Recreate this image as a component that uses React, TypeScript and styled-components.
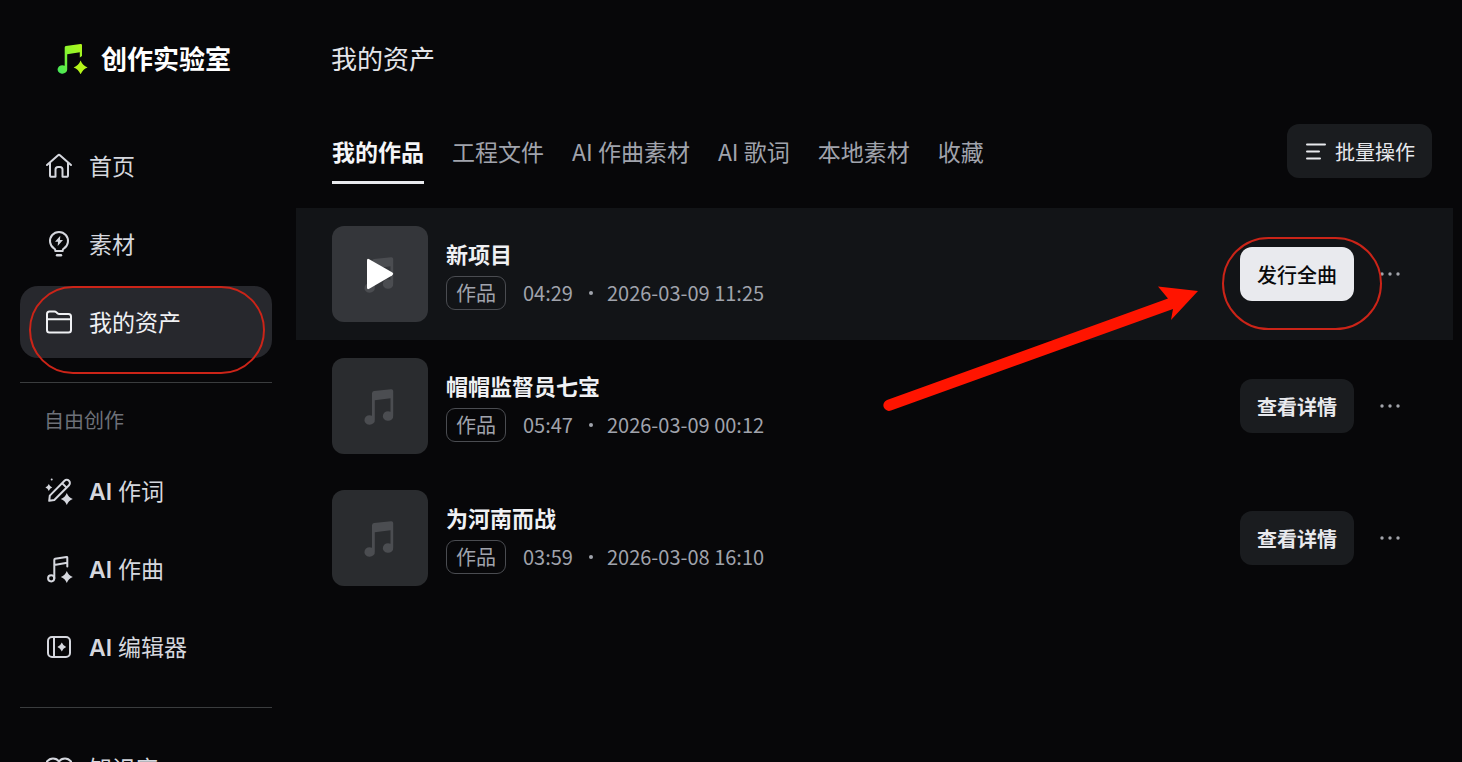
import React from "react";
import styled, { createGlobalStyle } from "styled-components";

const GlobalStyle = createGlobalStyle`
  *, *::before, *::after { box-sizing: border-box; }
  body {
    margin: 0;
    background: #070709;
    color: #e8e9ed;
    font-family: "Noto Sans CJK SC", sans-serif;
    overflow: hidden;
  }
  button { font: inherit; border: 0; cursor: pointer; }
  svg { display: block; }
`;

const Shell = styled.div`
  display: flex;
  height: 100vh;
  overflow: hidden;
`;

const Sidebar = styled.aside`
  flex: 0 0 296px;
  padding: 34px 24px 0 20px;
  overflow: hidden;
`;

const Brand = styled.a`
  display: flex;
  align-items: center;
  gap: 13px;
  height: 48px;
  padding-left: 36px;
  margin-bottom: 48px;
  color: #ffffff;
  font-size: 26px;
  font-weight: 700;
  line-height: 48px;
  text-decoration: none;
`;

const NavList = styled.ul`
  display: flex;
  flex-direction: column;
  gap: 6px;
  margin: 0;
  padding: 0;
  list-style: none;
`;

const NavItem = styled.li`
  position: relative;
`;

const NavLink = styled.a<{ $active?: boolean }>`
  display: flex;
  align-items: center;
  gap: 16px;
  height: 72px;
  padding-left: 25px;
  border-radius: 18px;
  background: ${(p) => (p.$active ? "#27282d" : "transparent")};
  color: ${(p) => (p.$active ? "#f0f1f4" : "#d5d7de")};
  font-family: Inter, "Noto Sans CJK SC", sans-serif;
  font-size: 23px;
  line-height: 36px;
  text-decoration: none;
`;

const NavText = styled.span`
  padding-top: 1px;
`;

const Latin = styled.span`
  font-weight: 600;
`;

const Divider = styled.hr`
  height: 1px;
  margin: 24px 0;
  border: 0;
  background: #3a3c3e;
`;

const SectionLabel = styled.h2`
  margin: -2px 0 20px;
  padding-left: 24px;
  color: #6d7078;
  font-size: 20px;
  font-weight: 400;
  line-height: 30px;
`;

const Main = styled.main`
  flex: 1;
  min-width: 0;
  padding: 34px 9px 0 0;
`;

const PageTitle = styled.h1`
  margin: 0 0 42px;
  padding-left: 35px;
  color: #e4e5e9;
  font-size: 26px;
  font-weight: 400;
  line-height: 48px;
`;

const Toolbar = styled.div`
  display: flex;
  align-items: flex-start;
  justify-content: space-between;
  padding: 0 21px 0 36px;
  margin-bottom: 24px;
`;

const Tabs = styled.div`
  display: flex;
  gap: 28px;
`;

const Tab = styled.button<{ $active?: boolean }>`
  height: 60px;
  padding: 0 0 4px;
  border-bottom: 3px solid ${(p) => (p.$active ? "#e8e9ed" : "transparent")};
  background: none;
  color: ${(p) => (p.$active ? "#f4f5f7" : "#a0a3ac")};
  font-size: 23px;
  font-weight: ${(p) => (p.$active ? 700 : 400)};
  line-height: 52px;
  white-space: nowrap;
`;

const BulkButton = styled.button`
  display: flex;
  align-items: center;
  gap: 8px;
  height: 54px;
  padding: 2px 17px 0 18px;
  border-radius: 12px;
  background: #1a1c1f;
  color: #e8e9ed;
  font-size: 20px;
  line-height: 30px;
`;

const Works = styled.ul`
  margin: 0;
  padding: 0;
  list-style: none;
`;

const Row = styled.li<{ $hover?: boolean }>`
  display: flex;
  align-items: center;
  gap: 18px;
  height: 132px;
  padding: 0 45px 0 36px;
  background: ${(p) => (p.$hover ? "#121417" : "transparent")};
`;

const Cover = styled.div<{ $hover?: boolean }>`
  position: relative;
  display: grid;
  place-items: center;
  flex: none;
  width: 96px;
  height: 96px;
  border-radius: 12px;
  background: ${(p) => (p.$hover ? "#34363a" : "#2a2c2f")};
`;

const PlayButton = styled.button`
  position: absolute;
  inset: 0;
  display: grid;
  place-items: center;
  padding: 0;
  background: none;
`;

const Info = styled.div`
  flex: 1;
  min-width: 0;
`;

const Title = styled.h3`
  margin: 0 0 8px;
  color: #f0f1f4;
  font-size: 22px;
  font-weight: 700;
  line-height: 30px;
`;

const Meta = styled.div`
  display: flex;
  align-items: center;
  color: #a0a3ac;
  font-size: 20px;
  line-height: 32px;
`;

const Tag = styled.span`
  padding: 0 9px;
  margin-right: 17px;
  border: 1px solid #4a4c51;
  border-radius: 9px;
`;

const Dot = styled.i`
  width: 4px;
  height: 4px;
  margin: 0 14px 0 16px;
  border-radius: 50%;
  background: #a0a3ac;
`;

const ActionSlot = styled.div`
  position: relative;
`;

const ActionButton = styled.button<{ $primary?: boolean }>`
  width: 114px;
  height: 54px;
  padding: 2px 0 0;
  border-radius: 12px;
  background: ${(p) => (p.$primary ? "#e9eaee" : "#1a1c1f")};
  color: ${(p) => (p.$primary ? "#08090b" : "#e8e9ed")};
  font-size: 20px;
  font-weight: ${(p) => (p.$primary ? 500 : 700)};
  line-height: 30px;
`;

const MoreButton = styled.button`
  display: grid;
  place-items: center;
  width: 36px;
  height: 36px;
  padding: 0;
  background: none;
  color: #a2a4ab;
`;

const Ring = styled.span<{ $left: number; $top: number; $width: number; $height: number }>`
  position: absolute;
  z-index: 2;
  left: ${(p) => p.$left}px;
  top: ${(p) => p.$top}px;
  width: ${(p) => p.$width}px;
  height: ${(p) => p.$height}px;
  border: 2px solid #cb2418;
  border-radius: 47px;
  pointer-events: none;
`;

const Arrow = styled.svg`
  position: absolute;
  z-index: 2;
  right: 154px;
  top: 36px;
  pointer-events: none;
`;

const Icon = ({ children }: { children: React.ReactNode }) => (
  <svg width="28" height="28" viewBox="0 0 28 28" fill="none" stroke="currentColor" strokeWidth="2" strokeLinecap="round" strokeLinejoin="round" aria-hidden="true">
    {children}
  </svg>
);

const spark = (x: number, y: number, r: number) => {
  const k = r * 0.28;
  return `M${x} ${y - r}Q${x + k} ${y - k} ${x + r} ${y}Q${x + k} ${y + k} ${x} ${y + r}Q${x - k} ${y + k} ${x - r} ${y}Q${x - k} ${y - k} ${x} ${y - r}Z`;
};

const HomeIcon = () => (
  <Icon>
    <path d="M2 13 12.8 3.4Q14 2.4 15.2 3.4L26 13" />
    <path d="M5 11V23.2Q5 24.8 6.6 24.8H10.5V17.5Q10.5 15 13 15H15Q17.5 15 17.5 17.5V24.8H21.4Q23 24.8 23 23.2V11" />
  </Icon>
);

const BulbIcon = () => (
  <Icon>
    <path d="M10.3 21V20.2Q10.3 19.2 9 18.4A9 9 0 1 1 19 18.4Q17.7 19.2 17.7 20.2V21Z" />
    <path d="M12 25.3H16" strokeWidth="2.4" />
    <path d="M15.3 5.8 10 11.8H13L12.7 16 18 10H15Z" fill="currentColor" stroke="none" />
  </Icon>
);

const FolderIcon = () => (
  <Icon>
    <path d="M2 6Q2 3.5 4.5 3.5H9.5Q10.6 3.5 11.5 4.4L12.4 5.3Q13.2 6 14.4 6H23.5Q26 6 26 8.5V22Q26 24.5 23.5 24.5H4.5Q2 24.5 2 22ZM2 11.2H26" />
  </Icon>
);

const PenIcon = () => (
  <Icon>
    <path d="M4.2 23.8 4.8 18.6 19.5 3.8A3 3 0 0 1 24 8.2L9.3 23ZM17.2 6.3 21.6 10.6" />
    <path d={spark(21.8, 22, 6)} fill="currentColor" stroke="none" />
    <path d={spark(3.8, 10.5, 3.4)} fill="currentColor" stroke="none" />
    <circle cx="6.7" cy="2.4" r="1" fill="currentColor" stroke="none" />
  </Icon>
);

const ComposeIcon = () => (
  <Icon>
    <circle cx="6.2" cy="23.3" r="3.1" />
    <path d="M9.3 23.3V4.8Q9.3 4 10.1 3.8L21.5 2Q22.3 1.9 22.3 2.7V11.6M9.3 10 22.3 7.8" />
    <path d={spark(21.8, 22, 6)} fill="currentColor" stroke="none" />
  </Icon>
);

const EditorIcon = () => (
  <Icon>
    <rect x="3" y="4" width="22" height="20" rx="4" />
    <path d="M9 4V24" />
    <path d={spark(16.8, 14, 4.4)} fill="currentColor" stroke="none" />
  </Icon>
);

const BookIcon = () => (
  <Icon>
    <path d="M14 7.5Q12 4.5 8 4.5Q4.5 4.5 2 7.5V23Q8 20 14 23Q20 20 26 23V7.5Q23.5 4.5 20 4.5Q16 4.5 14 7.5ZM14 7.5V23" />
  </Icon>
);

const Logo = () => (
  <svg width="32" height="32" viewBox="0 0 32 32" aria-hidden="true">
    <defs>
      <linearGradient id="brand" x1="0" y1="1" x2="1" y2="0">
        <stop offset="0" stopColor="#3fe65c" />
        <stop offset="0.6" stopColor="#8df52c" />
        <stop offset="1" stopColor="#b4f51a" />
      </linearGradient>
    </defs>
    <path
      fill="url(#brand)"
      d="M8.7 5.4Q8.7 4.2 9.9 4L24.5 2Q26 1.8 26 3.2V14L23.8 15.6V10.2L11.2 12.2V27.3A4.8 4.2 0 1 1 8.7 23.8Z"
    />
    <path d={spark(24.6, 25.4, 7)} fill="#b4f51a" />
  </svg>
);

const CoverNote = () => (
  <svg width="30" height="36" viewBox="1 -1 30 36" fill="#4b4d51" overflow="visible" aria-hidden="true">
    <path d="M8 4.4Q8 2.4 10 2.1L27 .2Q29.2 0 29.2 2V26.5A5.2 4.8 0 1 1 26.5 22.8V9.2L10.8 11.2V30.4A5.2 4.8 0 1 1 8 26.7Z" />
  </svg>
);

const PlayGlyph = () => (
  <svg width="28" height="32" viewBox="0 0 28 32" fill="#fff" aria-hidden="true">
    <path d="M1 2.5Q1 0 3.2 1.2L26 14.2Q28.4 15.8 26 17.4L3.2 30.8Q1 32 1 29.5Z" />
  </svg>
);

const BulkGlyph = () => (
  <svg width="22" height="20" viewBox="0 0 22 20" stroke="currentColor" strokeWidth="2" strokeLinecap="round" aria-hidden="true">
    <path d="M2 2.5H20M2 9.5H14M2 16.5H15" />
  </svg>
);

const MoreGlyph = () => (
  <svg width="22" height="4" viewBox="0 0 22 4" fill="currentColor" aria-hidden="true">
    <circle cx="3" cy="2" r="1.7" />
    <circle cx="11" cy="2" r="1.7" />
    <circle cx="19" cy="2" r="1.7" />
  </svg>
);

type Entry = { label: string; latin?: string; icon: React.ReactNode; active?: boolean };

const mainNav: Entry[] = [
  { label: "首页", icon: <HomeIcon /> },
  { label: "素材", icon: <BulbIcon /> },
  { label: "我的资产", icon: <FolderIcon />, active: true },
];

const createNav: Entry[] = [
  { latin: "AI", label: "作词", icon: <PenIcon /> },
  { latin: "AI", label: "作曲", icon: <ComposeIcon /> },
  { latin: "AI", label: "编辑器", icon: <EditorIcon /> },
];

const moreNav: Entry[] = [{ label: "知识库", icon: <BookIcon /> }];

const tabs = ["我的作品", "工程文件", "AI 作曲素材", "AI 歌词", "本地素材", "收藏"];

const works = [
  { title: "新项目", length: "04:29", date: "2026-03-09 11:25", action: "发行全曲", hover: true },
  { title: "帽帽监督员七宝", length: "05:47", date: "2026-03-09 00:12", action: "查看详情", hover: false },
  { title: "为河南而战", length: "03:59", date: "2026-03-08 16:10", action: "查看详情", hover: false },
];

const Nav = ({ items }: { items: Entry[] }) => (
  <NavList>
    {items.map((item) => (
      <NavItem key={item.label}>
        <NavLink href="#" $active={item.active} aria-current={item.active ? "page" : undefined}>
          {item.icon}
          <NavText>
            {item.latin && <Latin>{item.latin} </Latin>}
            {item.label}
          </NavText>
        </NavLink>
        {item.active && <Ring $left={9} $top={0} $width={236} $height={88} />}
      </NavItem>
    ))}
  </NavList>
);

export default function App() {
  return (
    <>
      <GlobalStyle />
      <Shell>
        <Sidebar>
          <Brand href="#">
            <Logo />
            创作实验室
          </Brand>
          <Nav items={mainNav} />
          <Divider />
          <SectionLabel>自由创作</SectionLabel>
          <Nav items={createNav} />
          <Divider />
          <Nav items={moreNav} />
        </Sidebar>
        <Main>
          <PageTitle>我的资产</PageTitle>
          <Toolbar>
            <Tabs role="tablist">
              {tabs.map((tab, i) => (
                <Tab key={tab} role="tab" aria-selected={i === 0} $active={i === 0}>
                  {tab}
                </Tab>
              ))}
            </Tabs>
            <BulkButton>
              <BulkGlyph />
              批量操作
            </BulkButton>
          </Toolbar>
          <Works>
            {works.map((work) => (
              <Row key={work.title} $hover={work.hover}>
                <Cover $hover={work.hover}>
                  <CoverNote />
                  {work.hover && (
                    <PlayButton aria-label="播放">
                      <PlayGlyph />
                    </PlayButton>
                  )}
                </Cover>
                <Info>
                  <Title>{work.title}</Title>
                  <Meta>
                    <Tag>作品</Tag>
                    <span>{work.length}</span>
                    <Dot />
                    <time>{work.date}</time>
                  </Meta>
                </Info>
                <ActionSlot>
                  <ActionButton $primary={work.hover}>{work.action}</ActionButton>
                  {work.hover && (
                    <>
                      <Ring $left={-18} $top={-10} $width={160} $height={93} />
                      <Arrow width="320" height="130" viewBox="0 0 320 130" fill="#ff1400" aria-hidden="true">
                        <path d="M7 117 288 15.5 278 3.5 318 8 291 37 293 26 11 127.5A5.5 5.5 0 0 1 7 117Z" />
                      </Arrow>
                    </>
                  )}
                </ActionSlot>
                <MoreButton aria-label="更多">
                  <MoreGlyph />
                </MoreButton>
              </Row>
            ))}
          </Works>
        </Main>
      </Shell>
    </>
  );
}
